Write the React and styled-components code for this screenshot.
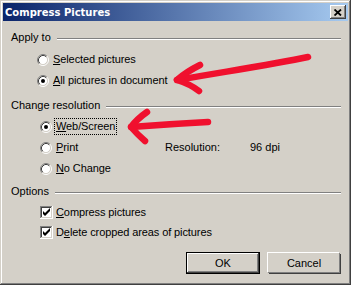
import React from 'react';
import styled, { createGlobalStyle } from 'styled-components';

const Global = createGlobalStyle`
  html, body { margin: 0; padding: 0; background: #d4d0c8; }
  body {
    font-family: "Liberation Sans", Arial, sans-serif;
    font-size: 11px;
    color: #000;
  }
`;

const Window = styled.div`
  position: relative;
  width: 351px;
  height: 285px;
  box-sizing: border-box;
  padding: 3px;
  background: #d4d0c8;
  box-shadow: inset -1px -1px #404040, inset 1px 1px #d4d0c8,
    inset -2px -2px #808080, inset 2px 2px #ffffff;
  display: flex;
  flex-direction: column;
`;

const TitleBar = styled.div`
  height: 18px;
  flex: none;
  display: flex;
  align-items: center;
  justify-content: space-between;
  padding: 0 2px;
  background: linear-gradient(to right, #0a246a, #a6caf0);
`;

const TitleText = styled.span`
  font-family: "DejaVu Sans", Verdana, sans-serif;
  font-weight: bold;
  font-size: 10px;
  color: #fff;
  line-height: 13px;
`;

const CloseButton = styled.div`
  width: 16px;
  height: 14px;
  box-sizing: border-box;
  background: #d4d0c8;
  box-shadow: inset -1px -1px #404040, inset 1px 1px #ffffff,
    inset -2px -2px #808080;
  display: flex;
  align-items: center;
  justify-content: center;
`;

const Body = styled.div`
  flex: 1;
  display: flex;
  flex-direction: column;
  padding: 0 7px 0 8px;
`;

const Legend = styled.div`
  display: flex;
  align-items: center;
  height: 13px;
  margin-top: ${(p) => p.$top}px;
`;

const LegendLabel = styled.span`
  line-height: 13px;
  white-space: nowrap;
`;

const Rule = styled.div`
  flex: 1;
  height: 0;
  margin: 3px 0 0 6px;
  border-top: 1px solid #808080;
  border-bottom: 1px solid #ffffff;
`;

const OptionList = styled.div`
  display: flex;
  flex-direction: column;
  padding-left: ${(p) => p.$indent}px;
  margin-top: ${(p) => p.$top}px;
`;

const Row = styled.div`
  height: ${(p) => p.$h || 21}px;
  display: flex;
  align-items: center;
`;

const ResolutionGrid = styled.div`
  display: grid;
  grid-template-columns: 125px 85px auto;
  grid-auto-rows: 21px;
  align-items: center;
  padding-left: 29px;
  margin-top: 4px;
`;

const Cell = styled.div`
  display: flex;
  align-items: center;
  grid-column: ${(p) => p.$col};
  grid-row: ${(p) => p.$row};
`;

const Label = styled.span`
  line-height: 13px;
  padding: 1px;
  border: 1px dotted ${(p) => (p.$focus ? '#000' : 'transparent')};
  white-space: nowrap;
  letter-spacing: -0.1px;
  & u { text-decoration: underline; text-underline-offset: 1px; }
`;

const Plain = styled.span`
  line-height: 13px;
  white-space: nowrap;
`;

const ButtonRow = styled.div`
  display: flex;
  justify-content: flex-end;
  gap: 7px;
  margin-top: 10px;
`;

const Button = styled.div`
  width: ${(p) => (p.$default ? 74 : 72)}px;
  height: ${(p) => (p.$default ? 22 : 20)}px;
  margin: ${(p) => (p.$default ? 0 : 1)}px;
  box-sizing: border-box;
  display: flex;
  align-items: center;
  justify-content: center;
  background: #d4d0c8;
  border: ${(p) => (p.$default ? '1px solid #000' : 'none')};
  box-shadow: ${(p) =>
    p.$default
      ? 'inset -1px -1px #404040, inset 1px 1px #ffffff, inset -2px -2px #808080'
      : 'inset -1px -1px #808080, inset 1px 1px #d4d0c8, -1px -1px 0 0 #ffffff, 1px 1px 0 0 #404040, 1px -1px 0 0 #d4d0c8'};
`;

const Overlay = styled.svg`
  position: absolute;
  left: 0;
  top: 0;
  pointer-events: none;
`;

const RadioIcon = ({ checked }) => (
  <svg width="12" height="12" viewBox="0 0 12 12" style={{ flex: 'none', marginRight: 2 }}>
    <circle cx="6" cy="6" r="4.5" fill="#fff" />
    <path d="M2.11 9.89 A5.5 5.5 0 0 1 9.89 2.11" fill="none" stroke="#808080" />
    <path d="M9.89 2.11 A5.5 5.5 0 0 1 2.11 9.89" fill="none" stroke="#ffffff" />
    <path d="M2.82 9.18 A4.5 4.5 0 0 1 9.18 2.82" fill="none" stroke="#404040" />
    <path d="M9.18 2.82 A4.5 4.5 0 0 1 2.82 9.18" fill="none" stroke="#d4d0c8" />
    {checked && <circle cx="6" cy="6" r="2" fill="#000" />}
  </svg>
);

const CheckIcon = () => (
  <svg width="13" height="13" viewBox="0 0 13 13" style={{ flex: 'none', marginRight: 1 }} shapeRendering="crispEdges">
    <rect x="0" y="0" width="13" height="13" fill="#ffffff" />
    <rect x="0" y="0" width="12" height="12" fill="#d4d0c8" />
    <rect x="0" y="0" width="12" height="1" fill="#808080" />
    <rect x="0" y="0" width="1" height="12" fill="#808080" />
    <rect x="1" y="1" width="10" height="10" fill="#fff" />
    <rect x="1" y="1" width="10" height="1" fill="#404040" />
    <rect x="1" y="1" width="1" height="10" fill="#404040" />
    <polygon points="3,5 5,7 10,2 10,5 5,10 3,8" fill="#000" shapeRendering="geometricPrecision" />
  </svg>
);

export default function App() {
  return (
    <>
      <Global />
      <Window>
        <TitleBar>
          <TitleText>Compress Pictures</TitleText>
          <CloseButton>
            <svg width="8" height="7" viewBox="0 0 8 7">
              <path d="M0.5 0.5 L7 6.5 M7 0.5 L0.5 6.5" stroke="#000" strokeWidth="1.8" />
            </svg>
          </CloseButton>
        </TitleBar>
        <Body>
          <Legend $top={10}>
            <LegendLabel>Apply to</LegendLabel>
            <Rule />
          </Legend>
          <OptionList $indent={26} $top={5}>
            <Row>
              <RadioIcon />
              <Label><u>S</u>elected pictures</Label>
            </Row>
            <Row>
              <RadioIcon checked />
              <Label><u>A</u>ll pictures in document</Label>
            </Row>
          </OptionList>

          <Legend $top={8}>
            <LegendLabel>Change resolution</LegendLabel>
            <Rule />
          </Legend>
          <ResolutionGrid>
            <Cell $col={1} $row={1}>
              <RadioIcon checked />
              <Label $focus><u>W</u>eb/Screen</Label>
            </Cell>
            <Cell $col={1} $row={2}>
              <RadioIcon />
              <Label><u>P</u>rint</Label>
            </Cell>
            <Cell $col={2} $row={2}>
              <Plain>Resolution:</Plain>
            </Cell>
            <Cell $col={3} $row={2}>
              <Plain>96 dpi</Plain>
            </Cell>
            <Cell $col={1} $row={3}>
              <RadioIcon />
              <Label><u>N</u>o Change</Label>
            </Cell>
          </ResolutionGrid>

          <Legend $top={6}>
            <LegendLabel>Options</LegendLabel>
            <Rule />
          </Legend>
          <OptionList $indent={29} $top={4}>
            <Row $h={20}>
              <CheckIcon />
              <Label><u>C</u>ompress pictures</Label>
            </Row>
            <Row $h={20}>
              <CheckIcon />
              <Label>D<u>e</u>lete cropped areas of pictures</Label>
            </Row>
          </OptionList>

          <ButtonRow>
            <Button $default>OK</Button>
            <Button>Cancel</Button>
          </ButtonRow>
        </Body>

        <Overlay width="351" height="285" viewBox="0 0 351 285">
          <g fill="none" stroke="#f0102e" strokeWidth="6.5" strokeLinecap="round" strokeLinejoin="round">
            <path d="M308 57 C 275 64, 235 70, 177 80" />
            <path d="M200 65 Q 186 72, 177 80 Q 190 84, 199 91" />
            <path d="M208 122 Q 170 124, 131 127" />
            <path d="M147 112 Q 137 119, 131 127 Q 137 134, 145 141" />
          </g>
        </Overlay>
      </Window>
    </>
  );
}
